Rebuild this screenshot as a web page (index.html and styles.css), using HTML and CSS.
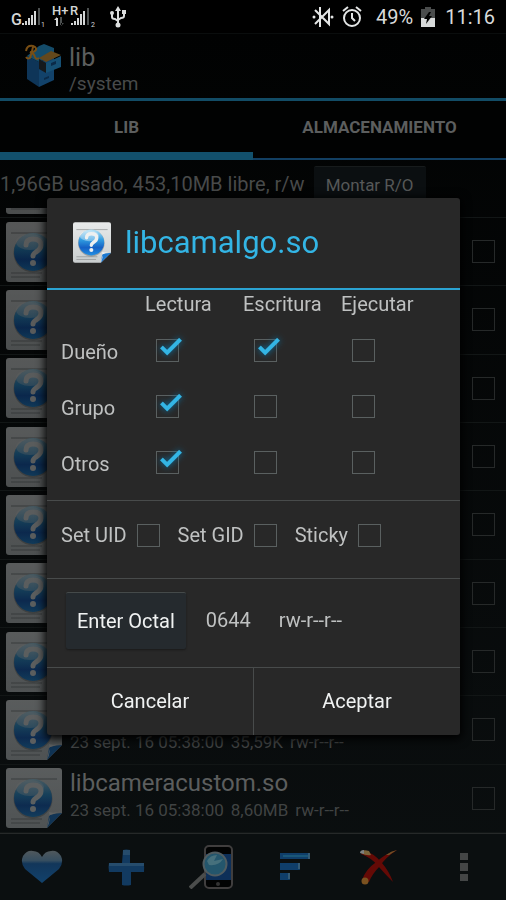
FILE: index.html
```html
<!DOCTYPE html>
<html lang="es">
<head>
    <meta charset="UTF-8">
    <meta name="viewport" content="width=device-width, initial-scale=1.0">
    <title>lib</title>
    <link rel="stylesheet" href="styles.css">
</head>
<body>
    <!-- Shared icons -->
    <svg class="sprite" aria-hidden="true">
        <defs>
            <linearGradient id="paper" x1="0" y1="0" x2="0" y2="1">
                <stop offset="0" stop-color="#e8eaea"/>
                <stop offset="1" stop-color="#c9cdce"/>
            </linearGradient>
            <linearGradient id="ball" x1="0" y1="0" x2="0" y2="1">
                <stop offset="0" stop-color="#b4e2f6"/>
                <stop offset="0.4" stop-color="#2f9be0"/>
                <stop offset="0.7" stop-color="#1560c4"/>
                <stop offset="1" stop-color="#2390e4"/>
            </linearGradient>
        </defs>
        <symbol id="file" viewBox="0 0 56 60">
            <path d="M3 0H53Q56 0 56 3V45L41 60H3Q0 60 0 57V3Q0 0 3 0Z" fill="url(#paper)"/>
            <path d="M5 11H51M5 51H36M5 55H34" stroke="#8b8f90" stroke-width="1"/>
            <circle cx="27" cy="31" r="19.500" fill="#555" opacity="0.4"/>
            <circle cx="27" cy="30" r="19" fill="url(#ball)"/>
            <ellipse cx="24" cy="20" rx="14" ry="8" fill="#fff" opacity="0.35"/>
            <path d="M20 23Q20 17 27 17Q35 17 35 23Q35 27 30 30Q27 32 27 34" fill="none" stroke="#eef0f0" stroke-width="5" stroke-linecap="round"/>
            <circle cx="27" cy="41" r="3" fill="#eef0f0"/>
            <path d="M56 45L41 60L43 48Q44 46 56 45Z" fill="#1c78d0"/>
            <path d="M56 43Q48 46 43 44Q45 52 41 60L44 47Z" fill="#f4f6f6"/>
        </symbol>
    </svg>

    <header class="statusbar">
        <svg class="signals" width="110" height="34" viewBox="0 0 110 34" role="img" aria-label="Señal">
            <g fill="#d4d6d6">
                <text class="carrier" x="11" y="25">G</text>
                <path d="M22 23h2v2h-2zM25 21h2v4h-2zM28 18h2v7h-2zM31 15h2v10h-2zM34 11h2v14h-2z"/>
                <path d="M38 8h2v17h-2z" fill="#4c5050"/>
                <text class="tiny" x="41" y="27">1</text>
                <text class="net" x="52" y="15">H+</text>
                <path d="M56 18h2v8h-2zM54 20l3-3v3z"/>
                <path d="M60 17h2v8h-2zM61 26l3-3h-3z" fill="#4c5050"/>
                <text class="net" x="70" y="15">R</text>
                <path d="M71 23h2v2h-2zM74 21h2v4h-2zM77 18h2v7h-2zM80 14h2v11h-2zM83 11h2v14h-2z"/>
                <path d="M87 8h2v17h-2z" fill="#4c5050"/>
                <text class="tiny" x="91" y="27">2</text>
            </g>
        </svg>
        <svg width="16" height="22" viewBox="0 0 16 22" role="img" aria-label="USB">
            <path d="M8 3V18M2 8V11Q2 13 5 13L8 15M14 7V10Q14 12 11 12L8 14" fill="none" stroke="#dcdede" stroke-width="2"/>
            <path d="M8 0l3 5H5zM12 4h4v4h-4z" fill="#dcdede"/>
            <circle cx="2" cy="7" r="2" fill="#dcdede"/>
            <circle cx="8" cy="19" r="2.500" fill="#dcdede"/>
        </svg>
        <div class="status-right">
            <svg width="22" height="22" viewBox="0 0 22 22" role="img" aria-label="Bluetooth silenciado">
                <path d="M3 4L17 18V4L3 18M8 1V21" fill="none" stroke="#e4e6e6" stroke-width="2"/>
                <circle cx="2" cy="11" r="1.500" fill="#e4e6e6"/>
                <circle cx="20" cy="11" r="1.500" fill="#e4e6e6"/>
            </svg>
            <svg width="20" height="22" viewBox="0 0 20 22" role="img" aria-label="Alarma">
                <circle cx="10" cy="12" r="8" fill="none" stroke="#e4e6e6" stroke-width="2"/>
                <path d="M10 7V12L13 15M1 5L6 1M19 5L14 1" fill="none" stroke="#e4e6e6" stroke-width="2"/>
            </svg>
            <span class="battery-text">49%</span>
            <svg width="14" height="20" viewBox="0 0 14 20" role="img" aria-label="Batería">
                <path d="M4 0H10V2H14V11H0V2H4Z" fill="#4a4c4c"/>
                <path d="M0 11H14V20H0Z" fill="#d8dada"/>
                <path d="M8 5L3 12H6L5 17L11 9H8L10 5Z" fill="#000"/>
            </svg>
            <time>11:16</time>
        </div>
    </header>

    <div class="app">
        <div class="action-bar">
            <svg width="37" height="44" viewBox="0 0 37 44" aria-hidden="true">
                <path d="M2 12L14 18V43L2 35Z" fill="#0e3558"/>
                <path d="M14 18L29 12V36L14 43Z" fill="#12426a"/>
                <path d="M2 12L14 2L19 0L29 4V12L14 18Z" fill="#144c6a"/>
                <path d="M14 15L21 19V29L14 25Z" fill="#15191c"/>
                <path d="M21 19L36 12V23L21 29Z" fill="#165074"/>
                <path d="M14 14L26 7L36 11L21 18Z" fill="#64481c"/>
                <path d="M26 19l5-2v3l-5 2zM19 34l5-2v2l-5 2z" fill="#0b2a48"/>
                <path d="M5 14Q7 8 8 3M1 7Q2 1 8 2Q13 4 10 7Q7 9 5 8Q9 9 10 13Q11 16 14 14M1 13Q3 16 6 13" fill="none" stroke="#784e14" stroke-width="2"/>
            </svg>
            <div class="location">
                <h1 class="folder">lib</h1>
                <p class="path">/system</p>
            </div>
        </div>

        <nav class="tabs">
            <a class="tab active" href="#lib">LIB</a>
            <a class="tab" href="#storage">ALMACENAMIENTO</a>
        </nav>

        <div class="storage">
            <span>1,96GB usado, 453,10MB libre, r/w</span>
            <button class="mount-btn" type="button">Montar R/O</button>
        </div>

        <ul class="files">
            <li class="file scrolled"><svg class="file-icon"><use href="#file"/></svg></li>
            <li class="file"><svg class="file-icon"><use href="#file"/></svg><input class="check" type="checkbox" aria-label="Archivo 1"></li>
            <li class="file"><svg class="file-icon"><use href="#file"/></svg><input class="check" type="checkbox" aria-label="Archivo 2"></li>
            <li class="file"><svg class="file-icon"><use href="#file"/></svg><input class="check" type="checkbox" aria-label="Archivo 3"></li>
            <li class="file"><svg class="file-icon"><use href="#file"/></svg><input class="check" type="checkbox" aria-label="Archivo 4"></li>
            <li class="file"><svg class="file-icon"><use href="#file"/></svg><input class="check" type="checkbox" aria-label="Archivo 5"></li>
            <li class="file"><svg class="file-icon"><use href="#file"/></svg><input class="check" type="checkbox" aria-label="Archivo 6"></li>
            <li class="file"><svg class="file-icon"><use href="#file"/></svg><input class="check" type="checkbox" aria-label="Archivo 7"></li>
            <li class="file">
                <svg class="file-icon"><use href="#file"/></svg>
                <div class="file-info">
                    <div class="file-name"></div>
                    <div class="file-meta"><span>23 sept. 16 05:38:00</span><span>35,59K</span><span>rw-r--r--</span></div>
                </div>
                <input class="check" type="checkbox" aria-label="Archivo 8">
            </li>
            <li class="file">
                <svg class="file-icon"><use href="#file"/></svg>
                <div class="file-info">
                    <div class="file-name">libcameracustom.so</div>
                    <div class="file-meta"><span>23 sept. 16 05:38:00</span><span>8,60MB</span><span>rw-r--r--</span></div>
                </div>
                <input class="check" type="checkbox" aria-label="libcameracustom.so">
            </li>
        </ul>

        <div class="toolbar">
            <button type="button" aria-label="Favoritos">
                <svg width="42" height="34" viewBox="0 0 42 34">
                    <defs>
                        <linearGradient id="heart" x1="0" y1="0" x2="0" y2="1">
                            <stop offset="0" stop-color="#50585c"/>
                            <stop offset="0.300" stop-color="#364e60"/>
                            <stop offset="0.400" stop-color="#12365a"/>
                            <stop offset="1" stop-color="#12426c"/>
                        </linearGradient>
                    </defs>
                    <path d="M21 33L4 19Q-1 13 2 6Q6 0 12 1Q18 1 21 7Q24 1 30 1Q36 0 40 6Q43 13 38 19Z" fill="url(#heart)"/>
                </svg>
            </button>
            <button type="button" aria-label="Nuevo">
                <svg width="37" height="37" viewBox="0 0 37 37">
                    <path d="M15 1Q18 0 22 1V14H35Q37 18 36 23H23V36Q18 37 14 36V23H1Q0 18 1 14H14Z" fill="#123a60"/>
                    <path d="M15 1H22V6H15ZM1 14H36V17H1Z" fill="#264c6c"/>
                </svg>
            </button>
            <button type="button" aria-label="Buscar">
                <svg width="44" height="44" viewBox="0 0 44 44">
                    <rect x="16" y="1" width="27" height="42" rx="4" fill="#020303" stroke="#403e3e" stroke-width="2"/>
                    <path d="M17 9H42V35H17Z" fill="#0d2f58"/>
                    <circle cx="29" cy="39" r="2" fill="#333"/>
                    <path d="M1 43L16 29" stroke="#4b4d4c" stroke-width="4"/>
                    <circle cx="26" cy="19" r="11.500" fill="#24566c" stroke="#505c60" stroke-width="2"/>
                    <path d="M18 16Q21 10 28 10L25 16L34 14Q30 21 20 20Z" fill="#46707c"/>
                </svg>
            </button>
            <button type="button" aria-label="Ordenar">
                <svg width="30" height="30" viewBox="0 0 30 30">
                    <path d="M0 1H29L30 7H0ZM0 11H19L20 18H0ZM0 21H9L10 28H0Z" fill="#0f3e6a"/>
                    <path d="M3 3H28V5H3Z" fill="#1a5678"/>
                    <path d="M28 1h2v6h-2zM18 11h2v6h-2zM8 21h2v6h-2z" fill="#345a74"/>
                </svg>
            </button>
            <button type="button" aria-label="Eliminar">
                <svg width="38" height="36" viewBox="0 0 38 36">
                    <path d="M3 1Q14 4 22 14Q29 22 33 33Q25 25 18 17Q12 9 1 5Z" fill="#640a06"/>
                    <path d="M37 1Q26 8 20 17Q12 25 9 33L2 31Q6 20 15 14Q26 4 37 1Z" fill="#640a06"/>
                    <path d="M37 1Q31 2 26 6L29 6Z" fill="#705226"/>
                    <path d="M1 3Q3 0 9 2L11 6Q6 7 1 4Z" fill="#7c643a"/>
                    <path d="M0 4Q0 1 4 1V5Z" fill="#7c8282"/>
                    <circle cx="5" cy="32" r="3.500" fill="#7c5220"/>
                </svg>
            </button>
            <button type="button" aria-label="Más">
                <svg width="8" height="28" viewBox="0 0 8 28">
                    <path d="M0 0H8V7H0ZM0 10H8V18H0ZM0 21H8V28H0Z" fill="#444646"/>
                </svg>
            </button>
        </div>
    </div>

    <!-- Permissions dialog -->
    <div class="overlay">
        <form class="dialog" role="dialog" aria-labelledby="dialog-title">
            <div class="dialog-title">
                <svg class="title-icon"><use href="#file"/></svg>
                <h2 id="dialog-title">libcamalgo.so</h2>
            </div>

            <div class="permissions">
                <table>
                    <thead>
                        <tr><td></td><th scope="col">Lectura</th><th scope="col">Escritura</th><th scope="col">Ejecutar</th></tr>
                    </thead>
                    <tbody>
                        <tr>
                            <th scope="row">Dueño</th>
                            <td><input class="check" type="checkbox" aria-label="Dueño Lectura" checked></td>
                            <td><input class="check" type="checkbox" aria-label="Dueño Escritura" checked></td>
                            <td><input class="check" type="checkbox" aria-label="Dueño Ejecutar"></td>
                        </tr>
                        <tr>
                            <th scope="row">Grupo</th>
                            <td><input class="check" type="checkbox" aria-label="Grupo Lectura" checked></td>
                            <td><input class="check" type="checkbox" aria-label="Grupo Escritura"></td>
                            <td><input class="check" type="checkbox" aria-label="Grupo Ejecutar"></td>
                        </tr>
                        <tr>
                            <th scope="row">Otros</th>
                            <td><input class="check" type="checkbox" aria-label="Otros Lectura" checked></td>
                            <td><input class="check" type="checkbox" aria-label="Otros Escritura"></td>
                            <td><input class="check" type="checkbox" aria-label="Otros Ejecutar"></td>
                        </tr>
                    </tbody>
                </table>
            </div>

            <div class="flags">
                <label>Set UID <input class="check" type="checkbox"></label>
                <label>Set GID <input class="check" type="checkbox"></label>
                <label>Sticky <input class="check" type="checkbox"></label>
            </div>

            <div class="octal">
                <button class="octal-btn" type="button">Enter Octal</button>
                <span>0644</span>
                <span class="mode">rw-r--r--</span>
            </div>

            <div class="dialog-buttons">
                <button type="button">Cancelar</button>
                <button type="submit">Aceptar</button>
            </div>
        </form>
    </div>
</body>
</html>
```
FILE: styles.css
```css
* {
    margin: 0;
    padding: 0;
    box-sizing: border-box;
}

body {
    height: 100vh;
    display: flex;
    flex-direction: column;
    font-family: Roboto, "Liberation Sans", sans-serif;
    font-size: 20px;
    line-height: 24px;
    background: #000;
    color: #5c5e5e;
    overflow: hidden;
}

button {
    font: inherit;
    color: inherit;
    background: none;
    border: none;
    cursor: pointer;
}

.sprite {
    position: absolute;
    width: 0;
    height: 0;
}

/* Status bar */
.statusbar {
    flex: none;
    height: 34px;
    display: flex;
    align-items: center;
    color: #d8dada;
    border-bottom: 1px solid #0a0d0d;
}

.carrier {
    font-size: 16px;
    font-weight: 500;
}

.net {
    font-size: 13px;
    font-weight: 500;
}

.tiny {
    font-size: 7px;
}

.status-right {
    flex: 1;
    display: flex;
    align-items: center;
    justify-content: flex-end;
    padding-right: 11px;
    gap: 8px;
}

.battery-text {
    margin-left: 6px;
}

.status-right time {
    margin-left: 2px;
}

/* File browser behind the dialog */
.app {
    flex: 1;
    min-height: 0;
    display: flex;
    flex-direction: column;
    background: linear-gradient(#010202, #0b0f10);
}

.action-bar {
    flex: none;
    height: 67px;
    display: flex;
    align-items: center;
    gap: 7px;
    padding-left: 25px;
    border-bottom: 3px solid #124c66;
}

.location {
    padding-top: 8px;
}

.folder {
    font-size: 25px;
    font-weight: 400;
    line-height: 28px;
}

.path {
    font-size: 19px;
    line-height: 24px;
    color: #484a4a;
}

.tabs {
    flex: none;
    height: 59px;
    display: flex;
    background: #010202;
}

.tab {
    flex: 1;
    font-size: 17px;
    font-weight: 700;
    line-height: 52px;
    text-align: center;
    color: #5c5e5e;
    text-decoration: none;
    border-bottom: 2px solid #123f62;
}

.tab.active {
    border-bottom: 8px solid #12506c;
}

.storage {
    flex: none;
    height: 48px;
    display: flex;
    align-items: flex-start;
    gap: 9px;
    padding-top: 6px;
    line-height: 36px;
    color: #484a4a;
    white-space: nowrap;
}

.mount-btn {
    padding: 0 12px;
    font-size: 17px;
    color: #565858;
    background: #0b0f11;
    border-top: 1px solid #171b1c;
    border-radius: 2px;
}

.files {
    flex: 1;
    min-height: 0;
    display: flex;
    flex-direction: column;
    list-style: none;
    overflow: hidden;
}

.file {
    flex: 1;
    min-height: 0;
    display: flex;
    align-items: center;
    padding: 0 11px 0 6px;
    border-bottom: 1px solid #121616;
}

.file.scrolled {
    flex: 0 0 10px;
    align-items: flex-end;
    padding-bottom: 3px;
    overflow: hidden;
}

.file-icon {
    flex: none;
    width: 56px;
    height: 60px;
    opacity: 0.36;
}

.file-info {
    margin-left: 8px;
    padding-bottom: 4px;
}

.file-name {
    height: 28px;
    font-size: 24px;
    line-height: 28px;
}

.file-meta {
    display: flex;
    gap: 7px;
    font-size: 17px;
    line-height: 26px;
    color: #404343;
}

.file .check {
    margin-left: auto;
    border-color: #262929;
}

.toolbar {
    flex: none;
    height: 67px;
    display: flex;
    background: #0b0f10;
    border-top: 1px solid #262929;
}

.toolbar button {
    flex: 1;
    display: flex;
    align-items: center;
    justify-content: center;
}

/* Check boxes */
.check {
    appearance: none;
    flex: none;
    position: relative;
    width: 23px;
    height: 23px;
    border: 1px solid #5a6060;
    vertical-align: middle;
}

.check:checked::after {
    content: "";
    position: absolute;
    left: 9px;
    top: -6px;
    box-sizing: border-box;
    width: 10px;
    height: 21px;
    border: solid #33b5e5;
    border-width: 0 4px 4px 0;
    transform: rotate(45deg);
    filter: drop-shadow(0 0 3px #0a6ea0);
}

/* Dialog */
.overlay {
    position: fixed;
    inset: 34px 0 2px;
    display: flex;
    align-items: center;
    padding: 0 46px 0 47px;
}

.dialog {
    flex: 1;
    background: #282828;
    color: #bfc1c1;
    border-radius: 3px;
    box-shadow: 0 2px 10px 2px #000;
    overflow: hidden;
}

.dialog-title {
    height: 92px;
    display: flex;
    align-items: center;
    gap: 14px;
    padding-left: 26px;
    border-bottom: 2px solid #2ba3d2;
}

.dialog-title h2 {
    font-size: 31px;
    font-weight: 400;
    line-height: 40px;
    color: #33b5e5;
}

.title-icon {
    width: 38px;
    height: 41px;
}

.permissions {
    padding: 0 0 8px 14px;
}

.permissions table {
    border-collapse: collapse;
    table-layout: fixed;
    width: 378px;
}

.permissions th {
    width: 98px;
    font-weight: 400;
    text-align: left;
}

.permissions thead tr {
    height: 34px;
    vertical-align: top;
}

.permissions thead th {
    line-height: 28px;
}

.permissions thead td {
    width: 84px;
}

.permissions tbody tr {
    height: 56px;
}

.permissions tbody td {
    padding: 0 0 4px 11px;
}

.flags {
    height: 78px;
    display: flex;
    align-items: center;
    gap: 18px;
    padding: 0 14px 8px;
    border-top: 1px solid #484b4b;
}

.flags label {
    display: flex;
    align-items: center;
    gap: 10px;
}

.octal {
    height: 89px;
    display: flex;
    align-items: center;
    gap: 20px;
    padding: 0 19px 5px;
    border-top: 1px solid #484b4b;
}

.octal-btn {
    height: 57px;
    padding: 0 11px;
    color: #f0f2f2;
    background: #252a2e;
    border-top: 1px solid #454a4a;
    border-radius: 2px;
    box-shadow: 0 1px 2px #1a1a1a;
}

.mode {
    margin-left: 8px;
}

.dialog-buttons {
    height: 68px;
    display: flex;
    border-top: 1px solid #484b4b;
}

.dialog-buttons button {
    flex: 1;
    color: #f0f2f2;
}

.dialog-buttons button + button {
    border-left: 1px solid #484b4b;
}
```
